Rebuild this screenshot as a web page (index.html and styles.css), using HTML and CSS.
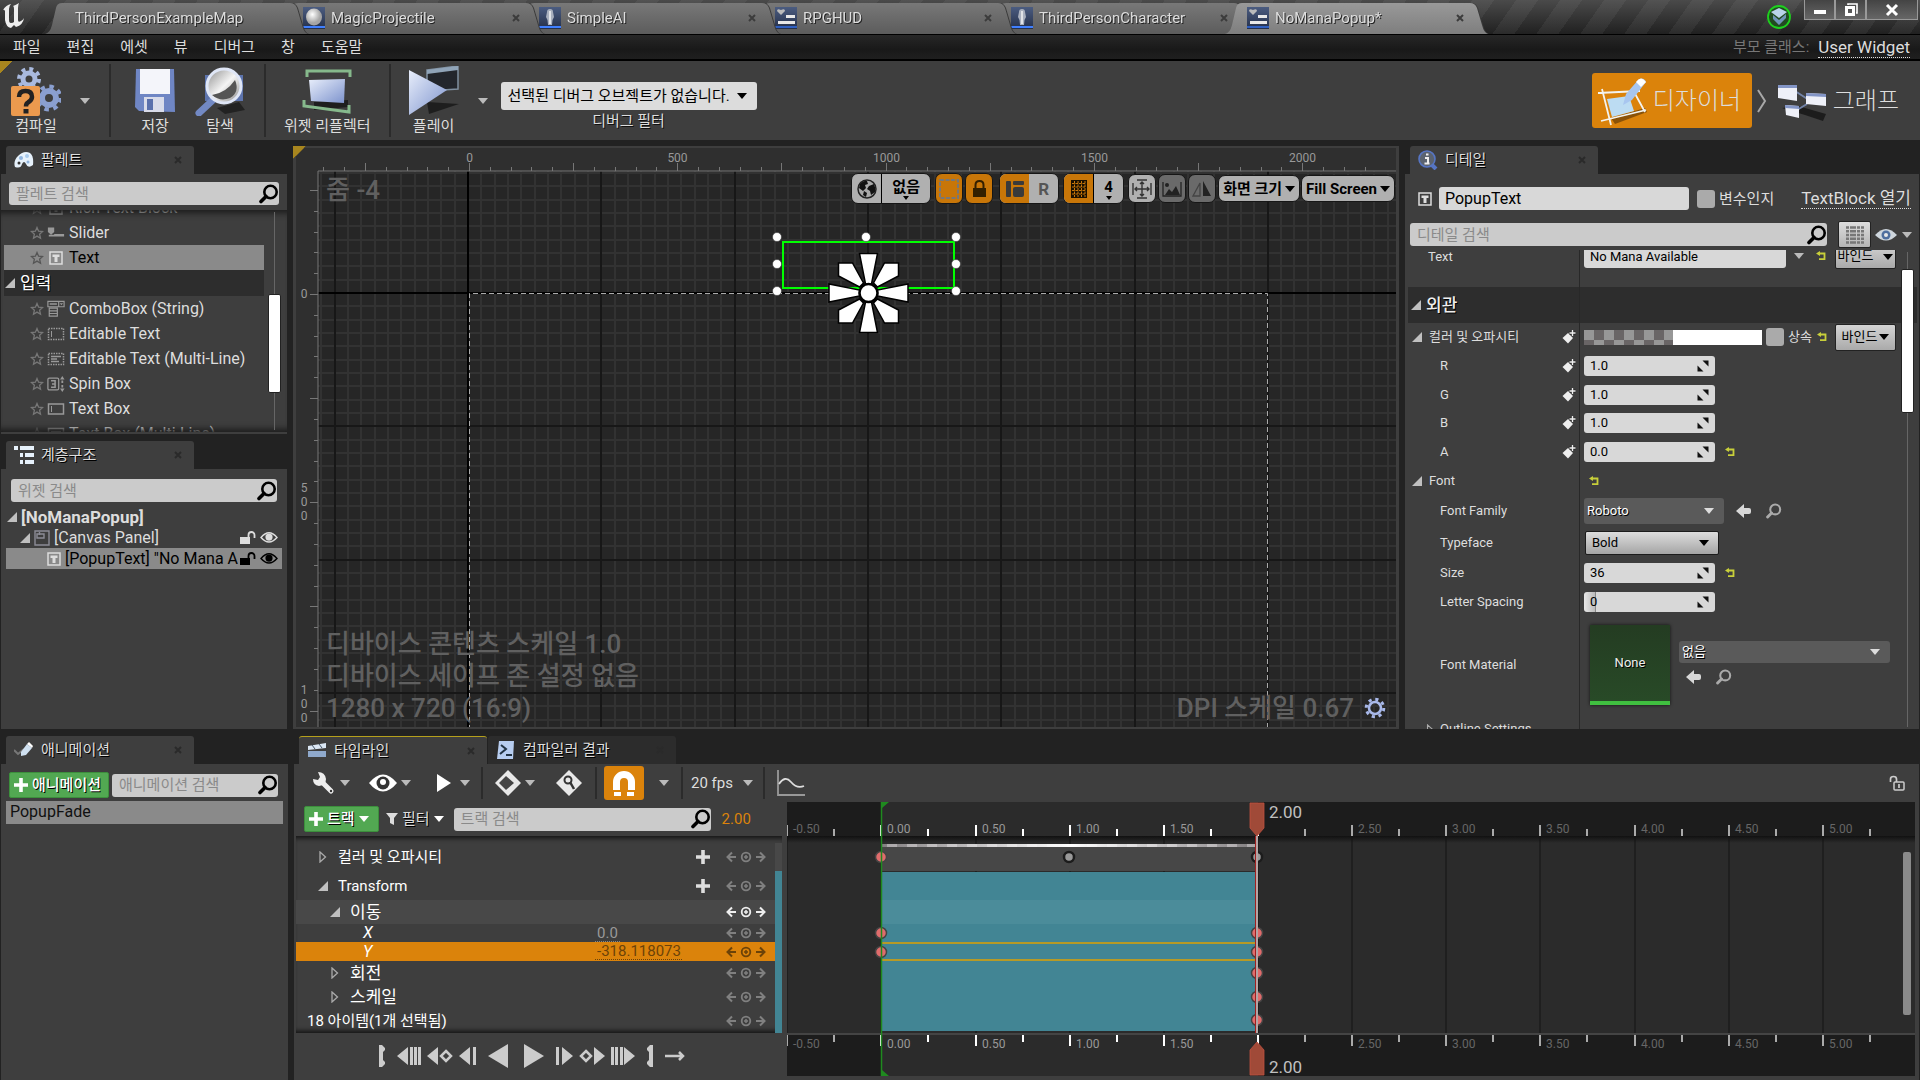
FILE: index.html
```html
<!DOCTYPE html>
<html lang="ko">
<head>
  <meta charset="UTF-8">
  <meta name="viewport" content="width=device-width, initial-scale=1.0">
  <title>NoManaPopup</title>
  <link rel="stylesheet" href="styles.css">
</head>
<body>
  <svg class="sprite" aria-hidden="true">
    <defs>
      <linearGradient id="blue" x1="0" y1="0" x2="1" y2="1"><stop offset="0" stop-color="#e8eefb"/><stop offset="1" stop-color="#7d93cd"/></linearGradient>
      <linearGradient id="steel" x1="0" y1="0" x2="0" y2="1"><stop offset="0" stop-color="#4b5c80"/><stop offset="1" stop-color="#25304a"/></linearGradient>
      <radialGradient id="ball" cx=".4" cy=".35"><stop offset="0" stop-color="#fff"/><stop offset="1" stop-color="#a5a5a5"/></radialGradient>
      <linearGradient id="lens" x1="0" y1="0" x2="1" y2="1"><stop offset="0" stop-color="#8c8c8c"/><stop offset=".5" stop-color="#f4f4f4"/><stop offset="1" stop-color="#888"/></linearGradient>
    </defs>
    <symbol id="i-search" viewBox="0 0 20 20"><circle cx="11.500" cy="8" r="6.200" fill="none" stroke="currentColor" stroke-width="2.600"/><path d="M7 12.500L2 17.500" stroke="currentColor" stroke-width="3.600" stroke-linecap="round"/></symbol>
    <symbol id="i-star" viewBox="0 0 14 14"><path d="M7 1.500l1.600 3.700 4 .3-3 2.700.9 4L7 10.100 3.500 12.200l.9-4-3-2.700 4-.3z" fill="none" stroke="currentColor" stroke-width="1.300"/></symbol>
    <symbol id="i-open" viewBox="0 0 10 10"><path d="M10 0v10H0z" fill="#c0c0c0"/></symbol>
    <symbol id="i-closed" viewBox="0 0 10 12"><path d="M2 1l5.500 5L2 11z" fill="none" stroke="#aaa" stroke-width="1.300"/></symbol>
    <symbol id="i-text" viewBox="0 0 14 14"><path d="M1 1h12v12H1z" fill="none" stroke="currentColor" stroke-width="1.500"/><path d="M3.500 3.500h7v2.600H8.500V11h-3V6.100h-2z" fill="currentColor"/></symbol>
    <symbol id="i-slider" viewBox="0 0 20 14"><path d="M1 1h7v5L4.500 9 1 6zM8 8h11v3H2V9h6z" fill="currentColor"/></symbol>
    <symbol id="i-combo" viewBox="0 0 20 20"><path d="M1 1.500h18v6H1zM13 1.500v6M2.500 9h9v9h-9zM2.500 12h9M2.500 15h9" fill="none" stroke="currentColor" stroke-width="1.300"/><path d="M3 3.700h8v1.600H3zM14.200 3.500h3.600L16 5.800z" fill="currentColor"/></symbol>
    <symbol id="i-edit" viewBox="0 0 18 14"><path d="M1.500 1.500h15v11h-15z" fill="none" stroke="currentColor" stroke-width="1.500" stroke-dasharray="1.500 1"/><path d="M4.500 4v6" stroke="currentColor"/></symbol>
    <symbol id="i-editm" viewBox="0 0 18 14"><path d="M1.500 1.500h15v11h-15z" fill="none" stroke="currentColor" stroke-width="1.500" stroke-dasharray="1.500 1"/><path d="M4 4.500h10M4 7h6M4 9.500h8" stroke="currentColor" stroke-width="1.300"/></symbol>
    <symbol id="i-box" viewBox="0 0 18 14"><path d="M1.500 2h15v10h-15z" fill="none" stroke="currentColor" stroke-width="1.500"/><path d="M4.500 4v6" stroke="currentColor"/></symbol>
    <symbol id="i-boxm" viewBox="0 0 18 14"><path d="M1.500 1.500h15v11h-15z" fill="none" stroke="currentColor" stroke-width="1.500"/><path d="M4 4.500h10M4 7h6" stroke="currentColor"/></symbol>
    <symbol id="i-spin" viewBox="0 0 20 18"><rect x="1" y="2.500" width="12" height="13" rx="1.500" fill="none" stroke="currentColor" stroke-width="1.400"/><path d="M4.500 5.500h4.500v7H4.500M5.500 9H9" fill="none" stroke="currentColor" stroke-width="1.700"/><path d="M14.500 4L17 0l2.500 4zM14.500 14l2.500 4 2.500-4zM16 5h2v3h-2zM16 10h2v3h-2z" fill="currentColor"/></symbol>
    <symbol id="i-canvas" viewBox="0 0 16 16"><path d="M1 1h14v14H1z" fill="none" stroke="#8c8c96" stroke-width="1.400"/><path d="M3 4h7v4H3zM5.500 2v3" fill="none" stroke="#8c8c96" stroke-width="1.400"/></symbol>
    <symbol id="i-unlock" viewBox="0 0 17 14"><path d="M1 6h10v7H1z" fill="currentColor"/><path d="M9.500 6.500V4a3 3 0 0 1 6 0v3" fill="none" stroke="currentColor" stroke-width="1.800"/></symbol>
    <symbol id="i-eye" viewBox="0 0 18 12"><path d="M1 6Q9-3.500 17 6 9 15 1 6z" fill="none" stroke="currentColor" stroke-width="1.400"/><circle cx="9" cy="5.600" r="3.600" fill="currentColor"/></symbol>
    <symbol id="i-plus" viewBox="0 0 14 14"><path d="M5.200 0h3.600v5.200H14v3.600H8.800V14H5.200V8.800H0V5.200h5.200z" fill="currentColor"/></symbol>
    <symbol id="i-reset" viewBox="0 0 10 10"><path d="M2 2.500h6.500v5.700H3" fill="none" stroke="#c8cf3a" stroke-width="1.800"/><path d="M0 2.500L4 0v5z" fill="#c8cf3a"/></symbol>
    <symbol id="i-key" viewBox="0 0 14 14"><path d="M6 3l5 5-5 5.500L.5 8z" fill="#eee"/><path d="M10.500 0v6M7.500 3h6" stroke="#222" stroke-width="3"/><path d="M10.500 0v6M7.500 3h6" stroke="#eee" stroke-width="1.500"/></symbol>
    <symbol id="i-spinner" viewBox="0 0 12 12"><path d="M5.500.500h6v6zM.500 5.500v6h6z" fill="#111"/></symbol>
    <symbol id="i-back" viewBox="0 0 16 16"><path d="M0 8l8-7v4h5a2 2 0 0 1 2 2v2a2 2 0 0 1-2 2H8v4z" fill="#d8d8d8"/></symbol>
    <symbol id="i-nav" viewBox="0 0 40 12"><path d="M10 6H2M6 1.500L1.500 6 6 10.500M30 6h8M34 1.500L38.500 6 34 10.500" fill="none" stroke="currentColor" stroke-width="2"/><circle cx="20" cy="6" r="4.300" fill="none" stroke="currentColor" stroke-width="1.800"/><path d="M20 4v4M18 6h4" stroke="currentColor" stroke-width="1.500"/></symbol>
    <symbol id="i-x" viewBox="0 0 8 8"><path d="M1 1l6 6M7 1L1 7" stroke="currentColor" stroke-width="2"/></symbol>
    <symbol id="i-class" viewBox="0 0 22 22"><path d="M0 0h22v22H0z" fill="url(#steel)"/><path d="M0 19h22v2H0z" fill="#3f7fff"/><path d="M11 2q3 0 3 3l1 5-1.500 3L13 18H9l-.5-5L7 10l1-5q0-3 3-3z" fill="#a9b0be"/><path d="M11 4v13" stroke="#f4f4f4" stroke-width="1.500"/></symbol>
    <symbol id="i-sphere" viewBox="0 0 22 22"><path d="M0 0h22v22H0z" fill="url(#steel)"/><path d="M0 19h22v2H0z" fill="#3f7fff"/><ellipse cx="11" cy="10" rx="8" ry="8.500" fill="url(#ball)"/></symbol>
    <symbol id="i-widget" viewBox="0 0 22 22"><path d="M0 0h22v22H0z" fill="url(#steel)"/><path d="M0 19h22v2H0z" fill="#2f5fc0"/><path d="M6 8L2 4q0-3 4-1 4-2 4 1z" fill="#bbb"/><path d="M11 8h9v3h-9zM3 14h17v3H3z" fill="#e8e8e8"/></symbol>
  </svg>

  <header class="titlebar">
    <svg class="logo" viewBox="0 0 30 34"><path d="M3 10q3-5 8-6-2 2-2 5v11q0 3 2 3 2 0 3-1V9q0-3-1-3 3-1 6-3-1 2-1 5v12q0 3 3 1 2-1 3-3-1 7-8 9l-2-2-3 3Q6 27 5 20V11q-1-2-2-1z" fill="#eee"/></svg>
    <nav class="doc-tabs">
      <a href="#" class="doc-tab first"><span class="shape"></span><span class="name">ThirdPersonExampleMap</span></a>
      <a href="#" class="doc-tab"><span class="shape"></span><svg class="ic22"><use href="#i-sphere"/></svg><span class="name">MagicProjectile</span><svg class="x"><use href="#i-x"/></svg></a>
      <a href="#" class="doc-tab"><span class="shape"></span><svg class="ic22"><use href="#i-class"/></svg><span class="name">SimpleAI</span><svg class="x"><use href="#i-x"/></svg></a>
      <a href="#" class="doc-tab"><span class="shape"></span><svg class="ic22"><use href="#i-widget"/></svg><span class="name">RPGHUD</span><svg class="x"><use href="#i-x"/></svg></a>
      <a href="#" class="doc-tab"><span class="shape"></span><svg class="ic22"><use href="#i-class"/></svg><span class="name">ThirdPersonCharacter</span><svg class="x"><use href="#i-x"/></svg></a>
      <a href="#" class="doc-tab active"><span class="shape"></span><svg class="ic22"><use href="#i-widget"/></svg><span class="name">NoManaPopup*</span><svg class="x"><use href="#i-x"/></svg></a>
    </nav>
    <svg class="tutorial" viewBox="0 0 26 26"><circle cx="13" cy="13" r="11" fill="#214a21" stroke="#1ed01e" stroke-width="1.800"/><path d="M5 8l8-4 8 4-8 6z" fill="#b9d3ea"/><path d="M7 11l6 5 7-6v4l-7 7-6-6z" fill="#6f93b8"/></svg>
    <div class="win-buttons">
      <button aria-label="최소화"><svg viewBox="0 0 14 14"><path d="M1 7h12v4H1z" fill="#fff"/></svg></button>
      <button aria-label="복원"><svg viewBox="0 0 14 14"><path d="M4 2V1h9v9h-1" fill="none" stroke="#fff" stroke-width="1.600"/><path d="M2.500 4.500h7v7h-7z" fill="none" stroke="#fff" stroke-width="3"/></svg></button>
      <button class="close" aria-label="닫기"><svg viewBox="0 0 14 14"><path d="M2 2l10 10M12 2L2 12" stroke="#fff" stroke-width="3"/></svg></button>
    </div>
  </header>

  <div class="menubar">
    <nav>
      <a href="#">파일</a><a href="#">편집</a><a href="#">에셋</a><a href="#">뷰</a><a href="#">디버그</a><a href="#">창</a><a href="#">도움말</a>
    </nav>
    <div class="parent-class"><span>부모 클래스:</span><a href="#" class="dotted">User Widget</a></div>
  </div>

  <div class="toolbar">
    <button class="tool compile">
      <svg viewBox="0 0 50 50"><g fill="none" stroke="#a9badf"><circle cx="18" cy="13" r="6" stroke-width="5"/><circle cx="18" cy="13" r="10" stroke-width="4" stroke-dasharray="3.900 3.950"/><circle cx="38" cy="32" r="7" stroke-width="6" stroke="#8a9fd0"/><circle cx="38" cy="32" r="11.500" stroke-width="4" stroke-dasharray="4.500 4.530" stroke="#8a9fd0"/></g><rect x="0" y="20" width="29" height="30" rx="2" fill="#eb9a4e"/><path d="M8 31q0-6 6.500-6t6.500 6q0 3-4 5.500-2 1-2 4" fill="none" stroke="#222" stroke-width="4.500"/><path d="M12.500 43h5v4.500h-5z" fill="#222"/></svg>
      <span>컴파일</span>
    </button>
    <button class="drop" aria-label="컴파일 옵션"><i class="tri"></i></button>
    <i class="vsep"></i>
    <button class="tool save">
      <svg viewBox="0 0 50 50"><path d="M6 3h38l1 43-36-1-4-4z" fill="#6f86c4"/><path d="M10 3h30v25H10z" fill="#f4f5fa"/><path d="M14 31h20v15H14z" fill="#d9dcea"/><path d="M17 33h6v11h-6z" fill="#5a70ac"/></svg>
      <span>저장</span>
    </button>
    <button class="tool browse">
      <svg viewBox="0 0 50 50"><path d="M22 42l22-6 6 8-20 4z" fill="#222"/><path d="M10 9h38v26H10z" fill="#5d74ad"/><path d="M18 34L4 47" stroke="#7289c4" stroke-width="7" stroke-linecap="round"/><circle cx="29" cy="20" r="17" fill="url(#lens)" stroke="#dfe6f6" stroke-width="3"/><path d="M17 29q14-2 23-15 5 12-5 18-10 4-18-3z" fill="#555"/></svg>
      <span>탐색</span>
    </button>
    <i class="vsep"></i>
    <button class="tool reflector">
      <svg viewBox="0 0 50 50"><path d="M12 36l34-2v7l-34 3z" fill="#1e1e1e"/><path d="M7 14l36-1-1 24-33-2z" fill="url(#blue)"/><path d="M5 11V5h43v6M2 34v6l45 6v-7" fill="none" stroke="#86b98c" stroke-width="3"/></svg>
      <span>위젯 리플렉터</span>
    </button>
    <i class="vsep"></i>
    <button class="tool play">
      <svg viewBox="0 0 50 50"><path d="M18 36l32 2-30 10z" fill="#1e1e1e"/><path d="M18 4l31-4v23l-31 2z" fill="#23262c" stroke="#8090a0" stroke-width="1.500"/><path d="M18 4l31-4v4L18 8z" fill="#90a4b8"/><path d="M0 4l38 20L0 49z" fill="url(#blue)"/></svg>
      <span>플레이</span>
    </button>
    <button class="drop" aria-label="플레이 옵션"><i class="tri"></i></button>
    <div class="debug">
      <div class="combo light"><select id="debug-object"><option>선택된 디버그 오브젝트가 없습니다.</option></select></div>
      <label for="debug-object">디버그 필터</label>
    </div>
    <div class="modes">
      <button class="mode on">
        <svg viewBox="0 0 50 50"><path d="M14 42l34-10 2 4-32 12z" fill="#8a5208"/><path d="M10 23l22-3 5 15-22 6z" fill="#bcdcf2"/><path d="M1 17l42-2M5 13l9 36M4 45l45-11M36 14l12 22" stroke="#f3f3ee" stroke-width="1.800" fill="none"/><path d="M26 29l3-11L42 3q5-2 7 3L35 24z" fill="#a8c6ef"/><path d="M39 6q5-7 10 0l-5 5z" fill="#fff"/></svg>
        디자이너
      </button>
      <svg class="chev" viewBox="0 0 10 24"><path d="M1 1l7 11-7 11" fill="none" stroke="#a8a8a8" stroke-width="2"/></svg>
      <button class="mode">
        <svg viewBox="0 0 50 50"><path d="M5 32l16-2 28 8-3 7-18-6z" fill="#1c1c1c"/><path d="M18 15l14 9M30 28L20 34" stroke="#7283a8" stroke-width="2"/><path d="M1 9h19v16L1 22zM29 17l20 1v12l-20-2zM8 29l14 1v12l-13-3z" fill="#eef0f8"/><path d="M1 9h19v3H1zM29 17l20 1v3l-20-1zM8 29l14 1v3l-14-1z" fill="#8395c6"/></svg>
        그래프
      </button>
    </div>
  </div>

  <main class="upper">
    <div class="side">
      <section class="panel palette">
        <div class="panel-tab"><svg class="ic20" viewBox="0 0 20 20"><path d="M1 17q-2-6 3-11 6-6 12-3 4 3 3 12-5 4-7-1-2-4-4 0-1 5-7 3z" fill="#e6f1fb"/><circle cx="7" cy="8" r="2" fill="#8fb4de"/><circle cx="13" cy="6" r="2" fill="#a8caec"/><circle cx="5" cy="13" r="1.500" fill="#333"/><circle cx="14" cy="12" r="1.500" fill="#8fb4de"/></svg>팔레트<svg class="x"><use href="#i-x"/></svg></div>
        <div class="panel-body">
          <div class="search"><input type="text" placeholder="팔레트 검색" aria-label="팔레트 검색"><svg><use href="#i-search"/></svg></div>
          <div class="scroll-box">
            <ul class="widget-list">
              <li><svg class="star"><use href="#i-star"/></svg><svg class="wi"><use href="#i-text"/></svg>Rich Text Block</li>
              <li><svg class="star"><use href="#i-star"/></svg><svg class="wi"><use href="#i-slider"/></svg>Slider</li>
              <li class="selected"><svg class="star"><use href="#i-star"/></svg><svg class="wi"><use href="#i-text"/></svg>Text</li>
              <li class="category"><svg class="arrow"><use href="#i-open"/></svg>입력</li>
              <li><svg class="star"><use href="#i-star"/></svg><svg class="wi big"><use href="#i-combo"/></svg>ComboBox (String)</li>
              <li><svg class="star"><use href="#i-star"/></svg><svg class="wi"><use href="#i-edit"/></svg>Editable Text</li>
              <li><svg class="star"><use href="#i-star"/></svg><svg class="wi"><use href="#i-editm"/></svg>Editable Text (Multi-Line)</li>
              <li><svg class="star"><use href="#i-star"/></svg><svg class="wi big"><use href="#i-spin"/></svg>Spin Box</li>
              <li><svg class="star"><use href="#i-star"/></svg><svg class="wi"><use href="#i-box"/></svg>Text Box</li>
              <li><svg class="star"><use href="#i-star"/></svg><svg class="wi"><use href="#i-boxm"/></svg>Text Box (Multi-Line)</li>
            </ul>
            <div class="scrollbar"><i></i></div>
          </div>
        </div>
      </section>

      <section class="panel hierarchy">
        <div class="panel-tab"><svg class="ic20" viewBox="0 0 20 20"><path d="M0 3h4M6 3h14M6 10h3M11 10h9M6 17h3M11 17h9" stroke="#e6f1fb" stroke-width="4"/></svg>계층구조<svg class="x"><use href="#i-x"/></svg></div>
        <div class="panel-body">
          <div class="search"><input type="text" placeholder="위젯 검색" aria-label="위젯 검색"><svg><use href="#i-search"/></svg></div>
          <ul class="tree">
            <li class="root"><svg class="arrow"><use href="#i-open"/></svg><span>[NoManaPopup]</span></li>
            <li class="lvl1"><svg class="arrow"><use href="#i-open"/></svg><svg class="ic16"><use href="#i-canvas"/></svg><span>[Canvas Panel]</span><svg class="lock"><use href="#i-unlock"/></svg><svg class="eye"><use href="#i-eye"/></svg></li>
            <li class="lvl2 selected"><svg class="ic14"><use href="#i-text"/></svg><span>[PopupText] "No Mana A</span><svg class="lock"><use href="#i-unlock"/></svg><svg class="eye"><use href="#i-eye"/></svg></li>
          </ul>
        </div>
      </section>
    </div>

    <section class="designer">
      <svg class="stage" id="stage">
        <g id="grid"></g>
        <path d="M0 147H4000M175 0V2000" stroke="#000" stroke-width="2" fill="none"/>
        <path d="M176.500 2000V147.500H974.500V2000" stroke="#aaa" stroke-dasharray="5 3" fill="none"/>
        <path d="M490 96h171v46H490z" fill="none" stroke="#0f0" stroke-width="2"/>
        <g fill="#fff" stroke="#222" stroke-width=".5"><circle cx="484" cy="91" r="4.500"/><circle cx="573" cy="91" r="4.500"/><circle cx="663" cy="91" r="4.500"/><circle cx="484" cy="118" r="4.500"/><circle cx="663" cy="118" r="4.500"/><circle cx="484" cy="145" r="4.500"/><circle cx="663" cy="145" r="4.500"/></g>
        <g transform="translate(575.500 147)" fill="#fff" stroke="#000" stroke-width="1.500">
          <path id="petal" d="M-9-39.500H9L3-9h-6z"/><use href="#petal" transform="rotate(90)"/><use href="#petal" transform="rotate(180)"/><use href="#petal" transform="rotate(270)"/>
          <path id="corner" d="M-30-30h14l11 20-4 4-21-11z"/><use href="#corner" transform="scale(-1 1)"/><use href="#corner" transform="rotate(180)"/><use href="#corner" transform="scale(1 -1)"/>
          <circle r="9" stroke-width="2.500"/>
        </g>
        <path d="M0 0H4000V25H25V2000H0z" fill="#2f2f2f"/>
        <path d="M4000 25H25V2000" fill="none" stroke="#777"/>
        <g id="rulers"></g>
        <path d="M0 0h13L0 13z" fill="#a8861f"/>
      </svg>
      <div class="zoom-label">줌 -4</div>
      <div class="view-bar">
        <div class="pill"><button aria-label="현지화"><svg viewBox="0 0 20 20"><circle cx="10" cy="10" r="9" fill="#a9a9a9" stroke="#222" stroke-width="1.500"/><path d="M3 5q4-4 7-3l1 3-3 1 1 3-3 3-4-3zM12 7l5-2q2 4 1 8l-4 3-1-4-3-2zM7 12l3 2-1 4-3-2z" fill="#111"/></svg></button><button class="stack div">없음<i class="mini"></i></button></div>
        <button class="pill one on" aria-label="점선 윤곽"><svg viewBox="0 0 20 20"><path d="M1 1h18v18H1z" fill="none" stroke="#777" stroke-width="2" stroke-dasharray="4 1.500"/></svg></button>
        <button class="pill one on gap2" aria-label="잠금"><svg viewBox="0 0 20 20"><path d="M4 9h13v9H4z" fill="#332000"/><path d="M6.500 10V6q0-4 4-4t4 4v4" fill="none" stroke="#332000" stroke-width="2"/></svg></button>
        <div class="pill"><button class="on" aria-label="레이아웃"><svg viewBox="0 0 20 20"><rect x="1" y="2" width="5" height="16" rx="1" fill="#3a3a3a"/><rect x="8" y="2" width="11" height="4" rx="1" fill="#3a3a3a"/><rect x="8" y="8" width="11" height="10" rx="2" fill="#3a3a3a"/></svg></button><button class="r">R</button></div>
        <div class="pill"><button class="on" aria-label="그리드 스냅"><svg viewBox="0 0 20 20"><path d="M2 1h16v18H2z" fill="#1a1000"/><path d="M3 4.500h14M3 8h14M3 11.500h14M3 15h14M5.500 2v16M9 2v16M12.500 2v16M16 2v16" stroke="#c87608" stroke-width="1" stroke-dasharray="2.500 1"/></svg></button><button class="stack div">4<i class="mini"></i></button></div>
        <button class="pill one small" aria-label="창에 맞춤"><svg viewBox="0 0 20 20"><path d="M5 1h10M5 19h10M1 4v12M19 4v12M10 3v14M3 10h14M8 5l2-2 2 2M8 15l2 2 2-2M5 8l-2 2 2 2M15 8l2 2-2 2" fill="none" stroke="#333" stroke-width="1.400"/></svg></button>
        <button class="pill one small dim" aria-label="배경"><svg viewBox="0 0 20 20"><path d="M1 3v14h18V3" fill="none" stroke="#222" stroke-width="1.300"/><path d="M3 16l4-6 3 3 4-6 4 9z" fill="#222"/><circle cx="5" cy="6" r="2" fill="#222"/></svg></button>
        <button class="pill one small dim" aria-label="뒤집기"><svg viewBox="0 0 20 20"><path d="M11 2v15h8z" fill="#222"/><path d="M8 4v13H1z" fill="none" stroke="#444" stroke-width="1.300"/></svg></button>
        <button class="pill txt">화면 크기<i class="tri dark"></i></button>
        <button class="pill txt">Fill Screen<i class="tri dark"></i></button>
      </div>
      <div class="info">
        <div>디바이스 콘텐츠 스케일 1.0</div>
        <div>디바이스 세이프 존 설정 없음</div>
        <div class="last"><span>1280 x 720 (16:9)</span><span>DPI 스케일 0.67<svg viewBox="0 0 22 22"><circle cx="11" cy="11" r="6" fill="none" stroke="#a9b9ea" stroke-width="2.600"/><circle cx="11" cy="11" r="8.800" fill="none" stroke="#a9b9ea" stroke-width="3" stroke-dasharray="3.200 3.710"/></svg></span></div>
      </div>
    </section>

    <section class="panel details">
      <div class="panel-tab"><svg class="ic20" viewBox="0 0 20 20"><path d="M13 14l5 5" stroke="#5675c4" stroke-width="4"/><circle cx="9" cy="9" r="8" fill="#5b6370" stroke="#5675c4" stroke-width="1.600"/><path d="M7 8h3v5M6.500 13.500h5M8 4.500h2.500" stroke="#eee" stroke-width="2" fill="none"/></svg>디테일<svg class="x"><use href="#i-x"/></svg></div>
      <div class="panel-body">
        <div class="name-row">
          <svg class="ic14"><use href="#i-text"/></svg>
          <input type="text" class="box name-box" value="PopupText" aria-label="이름">
          <input type="checkbox" id="is-var"><label for="is-var">변수인지</label>
          <a href="#" class="dotted">TextBlock 열기</a>
        </div>
        <div class="filter-row">
          <div class="search"><input type="text" placeholder="디테일 검색" aria-label="디테일 검색"><svg><use href="#i-search"/></svg></div>
          <button class="grid-btn" aria-label="프로퍼티 매트릭스"><svg viewBox="0 0 18 18"><path d="M0 1.500h18M0 5.300h18M0 9h18M0 12.800h18M0 16.500h18" stroke="#777" stroke-width="2.400" stroke-dasharray="3 1 6 1"/></svg></button>
          <button class="view-btn" aria-label="보기 옵션"><svg viewBox="0 0 22 14"><path d="M0 7Q11-5 22 7 11 18 0 7z" fill="#ced6dd"/><circle cx="11" cy="7" r="4.500" fill="#4f6f9f"/><circle cx="11" cy="7" r="2" fill="#e8e8e8"/></svg><i class="tri"></i></button>
        </div>
        <div class="scroll-box">
          <div class="props">
            <div class="prop r-text"><label for="p-text">Text</label><div class="val"><input type="text" id="p-text" class="box wide" value="No Mana Available"><i class="tri"></i><svg class="reset"><use href="#i-reset"/></svg><button class="bind">바인드<i class="tri dark"></i></button></div></div>
            <div class="prop head"><h2><svg class="arrow"><use href="#i-open"/></svg>외관</h2><div class="val"></div></div>
            <div class="prop r28"><div class="lbl"><svg class="arrow"><use href="#i-open"/></svg>컬러 및 오파시티<svg class="key"><use href="#i-key"/></svg></div><div class="val tight"><button class="swatch" aria-label="컬러"></button><input type="checkbox" id="inherit"><label for="inherit">상속</label><svg class="reset"><use href="#i-reset"/></svg><button class="bind">바인드<i class="tri dark"></i></button></div></div>
            <div class="prop"><label for="p-r">R<svg class="key"><use href="#i-key"/></svg></label><div class="val"><span class="num"><input type="text" id="p-r" class="box" value="1.0"><svg><use href="#i-spinner"/></svg></span></div></div>
            <div class="prop"><label for="p-g">G<svg class="key"><use href="#i-key"/></svg></label><div class="val"><span class="num"><input type="text" id="p-g" class="box" value="1.0"><svg><use href="#i-spinner"/></svg></span></div></div>
            <div class="prop r28"><label for="p-b">B<svg class="key"><use href="#i-key"/></svg></label><div class="val"><span class="num"><input type="text" id="p-b" class="box" value="1.0"><svg><use href="#i-spinner"/></svg></span></div></div>
            <div class="prop"><label for="p-a">A<svg class="key"><use href="#i-key"/></svg></label><div class="val"><span class="num"><input type="text" id="p-a" class="box" value="0.0"><svg><use href="#i-spinner"/></svg></span><svg class="reset"><use href="#i-reset"/></svg></div></div>
            <div class="prop"><div class="lbl"><svg class="arrow"><use href="#i-open"/></svg>Font</div><div class="val"><svg class="reset lone"><use href="#i-reset"/></svg></div></div>
            <div class="prop r32"><label for="p-family">Font Family</label><div class="val"><div class="combo gray family"><select id="p-family"><option>Roboto</option></select></div><svg class="ic16"><use href="#i-back"/></svg><svg class="ic16 mag"><use href="#i-search"/></svg></div></div>
            <div class="prop r32"><label for="p-face">Typeface</label><div class="val"><div class="combo face"><select id="p-face"><option>Bold</option></select></div></div></div>
            <div class="prop r28"><label for="p-size">Size</label><div class="val"><span class="num"><input type="text" id="p-size" class="box" value="36"><svg><use href="#i-spinner"/></svg></span><svg class="reset"><use href="#i-reset"/></svg></div></div>
            <div class="prop"><label for="p-ls">Letter Spacing</label><div class="val"><span class="num"><input type="text" id="p-ls" class="box part" value="0"><svg><use href="#i-spinner"/></svg></span></div></div>
            <div class="prop r-mat"><label for="p-mat">Font Material</label><div class="val"><div class="thumb">None</div><div class="mat"><div class="combo gray"><select id="p-mat"><option>없음</option></select></div><div><svg class="ic16"><use href="#i-back"/></svg><svg class="ic16 mag"><use href="#i-search"/></svg></div></div></div></div>
            <div class="prop"><div class="lbl sub"><svg class="arrow"><use href="#i-closed"/></svg>Outline Settings</div><div class="val"></div></div>
          </div>
          <div class="scrollbar"><i></i></div>
        </div>
      </div>
    </section>
  </main>

  <div class="lower">
    <section class="panel animations">
      <div class="panel-tab"><svg class="ic20" viewBox="0 0 20 20"><path d="M0 10l4 4 6-5" fill="none" stroke="#777" stroke-width="2"/><path d="M7 12l6-8 5 4-6 7-5 1z" fill="#cfe0f0"/><path d="M13 4l2-2 4 4-1 2z" fill="#fff"/></svg>애니메이션<svg class="x"><use href="#i-x"/></svg></div>
      <div class="panel-body">
        <div class="anim-row">
          <button class="green"><svg class="ic14"><use href="#i-plus"/></svg>애니메이션</button>
          <div class="search"><input type="text" placeholder="애니메이션 검색" aria-label="애니메이션 검색"><svg><use href="#i-search"/></svg></div>
        </div>
        <div class="anim-item">PopupFade</div>
      </div>
    </section>

    <section class="panel timeline">
      <div class="tab-strip">
        <div class="panel-tab current"><svg class="ic20" viewBox="0 0 20 20"><path d="M1 5l18-3v5L1 9z" fill="#dbe7f4"/><path d="M1 10h18v6H1z" fill="#8fa9cc"/><path d="M5 4l3 4M12 3l3 4" stroke="#456"/></svg>타임라인<svg class="x"><use href="#i-x"/></svg></div>
        <div class="panel-tab idle"><svg class="ic20" viewBox="0 0 20 20"><path d="M3 1h15l-1 18H1z" fill="#b7cdf0"/><path d="M5 5l5 4-6 5M10 15h6" fill="none" stroke="#234" stroke-width="2"/></svg>컴파일러 결과<svg class="x"><use href="#i-x"/></svg></div>
      </div>
      <div class="panel-body">
        <div class="seq-bar">
          <button class="sq wrench" aria-label="옵션"><svg viewBox="0 0 24 24"><path d="M10 11l9 9" stroke="#eee" stroke-width="5" stroke-linecap="round"/><path d="M6 1l2 5-2 3-5-1q0 6 6 7 7-1 7-7-1-7-8-7z" fill="#eee"/><circle cx="19" cy="20" r="1.200" fill="#333"/></svg><i class="tri"></i></button>
          <button class="sq view" aria-label="보기"><svg viewBox="0 0 28 18"><path d="M0 9Q14-8 28 9 14 26 0 9z" fill="#fff"/><circle cx="14" cy="9" r="6.500" fill="#333"/><circle cx="14" cy="8" r="3" fill="#fff"/></svg><i class="tri"></i></button>
          <button class="sq playopt" aria-label="재생 옵션"><svg viewBox="0 0 14 18"><path d="M0 0l14 9-14 9z" fill="#fff"/></svg><i class="tri"></i></button>
          <i class="vsep"></i>
          <button class="sq keyopt" aria-label="키 옵션"><svg viewBox="0 0 26 26"><path d="M13 0l13 13-13 13L0 13z" fill="#e8e8e8"/><path d="M11 6l8 7-8 7-7-7z" fill="#444"/></svg><i class="tri"></i></button>
          <button class="sq autokey" aria-label="자동 키"><svg viewBox="0 0 26 26"><path d="M13 0l13 13-13 13L0 13z" fill="#e8e8e8"/><circle cx="12" cy="10" r="3.500" fill="none" stroke="#333" stroke-width="2"/><path d="M14 12l4 7" stroke="#333" stroke-width="2.500"/></svg></button>
          <i class="vsep"></i>
          <button class="magnet" aria-label="스냅"><svg viewBox="0 0 24 26"><path d="M4.500 20v-8a7.500 7.500 0 0 1 15 0v8" fill="none" stroke="#fff" stroke-width="7"/><path d="M2 22h7v4H2zM15 22h7v4h-7z" fill="#fff"/></svg></button>
          <button class="drop2" aria-label="스냅 옵션"><i class="tri"></i></button>
          <i class="vsep"></i>
          <button class="fps">20 fps<i class="tri"></i></button>
          <i class="vsep"></i>
          <button class="curve" aria-label="커브 에디터"><svg viewBox="0 0 28 26"><path d="M1 0v25h27" fill="none" stroke="#999" stroke-width="1.800"/><path d="M2 14q6-9 12-2t13 4" fill="none" stroke="#ddd" stroke-width="1.800"/></svg></button>
          <svg class="seq-lock" viewBox="0 0 16 16"><rect x="5" y="7" width="10" height="8" rx="1" fill="none" stroke="#ccc" stroke-width="1.500"/><path d="M1.500 7V4q0-2.500 3-2.500T7.500 4v3M10 9v4" fill="none" stroke="#ccc" stroke-width="1.700"/></svg>
        </div>
        <div class="seq-main">
          <div class="tracks">
            <div class="track-bar">
              <button class="green"><svg class="ic14"><use href="#i-plus"/></svg>트랙<i class="tri"></i></button>
              <button class="filter"><svg viewBox="0 0 12 12"><path d="M0 0h12L8 5v7l-4-2V5z" fill="#ddd"/></svg>필터<i class="tri"></i></button>
              <div class="search"><input type="text" placeholder="트랙 검색" aria-label="트랙 검색"><svg><use href="#i-search"/></svg></div>
              <span class="now">2.00</span>
            </div>
            <div class="track-list">
              <div class="track t28 plain"><svg class="arrow"><use href="#i-closed"/></svg>컬러 및 오파시티<svg class="plus"><use href="#i-plus"/></svg><svg class="nav"><use href="#i-nav"/></svg></div>
              <div class="track t29"><svg class="arrow"><use href="#i-open"/></svg>Transform<svg class="plus"><use href="#i-plus"/></svg><svg class="nav"><use href="#i-nav"/></svg></div>
              <div class="track child hover"><svg class="arrow"><use href="#i-open"/></svg>이동<svg class="nav"><use href="#i-nav"/></svg></div>
              <div class="track axis"><em>X</em><input class="axis-val short" value="0.0" aria-label="X"><svg class="nav"><use href="#i-nav"/></svg></div>
              <div class="track axis picked"><em>Y</em><input class="axis-val" value="-318.118073" aria-label="Y"><svg class="nav"><use href="#i-nav"/></svg></div>
              <div class="track child"><svg class="arrow"><use href="#i-closed"/></svg>회전<svg class="nav"><use href="#i-nav"/></svg></div>
              <div class="track child"><svg class="arrow"><use href="#i-closed"/></svg>스케일<svg class="nav"><use href="#i-nav"/></svg></div>
              <div class="track status">18 아이템(1개 선택됨)<svg class="nav"><use href="#i-nav"/></svg></div>
            </div>
            <div class="transport">
              <button class="edge" aria-label="시작 지정"><svg width="8" viewBox="0 0 8 24"><path d="M1 1h3l3 3v2L5 8v8l2 2v2l-3 3H1z"/></svg></button>
              <button aria-label="처음으로"><svg width="24" viewBox="0 0 24 24"><path d="M11 3v18L0 12zM13 3h3v18h-3zM17 3h3v18h-3zM21 3h3v18h-3z"/></svg></button>
              <button aria-label="이전 키"><svg width="26" viewBox="0 0 26 24"><path d="M11 3v18L0 12z"/><path d="M19 7l5 5-5 5-5-5z" fill="none" stroke="#ccc" stroke-width="2.500"/></svg></button>
              <button aria-label="이전 프레임"><svg width="18" viewBox="0 0 18 24"><path d="M11 3v18L0 12zM14 3h3v18h-3z"/></svg></button>
              <button class="large" aria-label="역재생"><svg width="20" viewBox="0 0 20 24"><path d="M20 0v24L0 12z"/></svg></button>
              <button class="large" aria-label="재생"><svg width="20" viewBox="0 0 20 24"><path d="M0 0v24l20-12z"/></svg></button>
              <button aria-label="다음 프레임"><svg width="18" viewBox="0 0 18 24"><path d="M7 3v18l11-9zM1 3h3v18H1z"/></svg></button>
              <button aria-label="다음 키"><svg width="26" viewBox="0 0 26 24"><path d="M15 3v18l11-9z"/><path d="M7 7l5 5-5 5-5-5z" fill="none" stroke="#ccc" stroke-width="2.500"/></svg></button>
              <button aria-label="끝으로"><svg width="24" viewBox="0 0 24 24"><path d="M13 3v18l11-9zM0 3h3v18H0zM4 3h3v18H4zM9 3h3v18H9z"/></svg></button>
              <button class="edge" aria-label="끝 지정"><svg width="8" viewBox="0 0 8 24"><path d="M7 1H4L1 4v2l2 2v8l-2 2v2l3 3h3z"/></svg></button>
              <button aria-label="반복 안함"><svg width="20" viewBox="0 0 20 24"><path d="M0 12h18M14 8l4 4-4 4" fill="none" stroke="#ccc" stroke-width="2.500"/></svg></button>
            </div>
          </div>
          <div class="time-area">
            <svg class="time" id="time">
              <defs>
                <pattern id="checker" width="20" height="4" patternUnits="userSpaceOnUse"><path d="M0 0h20v4H0z" fill="#a09c9e"/><path d="M10 0h10v4H10z" fill="#757173"/></pattern>
                <linearGradient id="fade"><stop offset="0" stop-color="#fff" stop-opacity=".1"/><stop offset=".5" stop-color="#fff"/><stop offset="1" stop-color="#fff" stop-opacity=".1"/></linearGradient>
                <linearGradient id="shade" x1="0" y1="0" x2="0" y2="1"><stop offset="0" stop-color="#111"/><stop offset="1" stop-color="#111" stop-opacity="0"/></linearGradient>
              </defs>
              <path d="M0 0h4000v274H0z" fill="#1c1c1c"/>
              <path d="M95 0h376v274H95z" fill="#2b2b2b"/>
              <path d="M0 34h4000v197H0z" fill="#2b2b2b"/>
              <g id="time-grid"></g>
              <path d="M0 34h4000v7H0z" fill="url(#shade)"/>
              <path d="M0 231h4000v2H0z" fill="#444"/>
              <path d="M95 42h373v27H95z" fill="#474747"/>
              <path d="M95 42h373v3H95z" fill="url(#checker)"/><path d="M95 42h373v3H95z" fill="url(#fade)"/>
              <path d="M95 70h373v159H95z" fill="#428594"/>
              <path d="M95 98h373v24H95z" fill="#4b8c9a"/>
              <path d="M95 141h373M95 158h373" stroke="#b79a26" stroke-width="2"/>
              <g id="time-ticks"></g>
              <g id="keys"></g>
              <path d="M94.500 0v274" stroke="#1f8a1f" stroke-width="1.500"/><path d="M95 0h7l-7 6zM95 274h7l-7-6z" fill="#1f8a1f"/>
              <path d="M470 34v197" stroke="#b4a4a4" stroke-width="2"/><path d="M468.500 34v197" stroke="#a02020"/>
              <path d="M463 1h14v25l-7 8-7-8zM463 273h14v-25l-7-8-7 8z" fill="#a04a38" stroke="#c05040" stroke-width=".8"/>
              <text class="now-text" x="482" y="16">2.00</text><text class="now-text" x="482" y="271">2.00</text>
            </svg>
            <div class="time-scroll"></div>
          </div>
        </div>
      </div>
    </section>
  </div>

  <script>
    const NS = "http://www.w3.org/2000/svg";

    const add = (parent, tag, attrs, text) => {
      const el = document.createElementNS(NS, tag);
      Object.entries(attrs).forEach(([k, v]) => el.setAttribute(k, v));
      if (text !== undefined) el.textContent = text;
      parent.appendChild(el);
      return el;
    };

    const stage = document.getElementById("stage").getBoundingClientRect();
    const grid = document.getElementById("grid");
    const rulers = document.getElementById("rulers");

    // Designer grid, one major line every ten cells
    const drawGrid = (major) => {
      const attrs = { stroke: major ? "#171717" : "#323232", "stroke-width": 2 };
      for (let i = -12; i * 13 < stage.width; i++) {
        if ((i % 10 === 0) !== major) continue;
        add(grid, "path", { d: `M${Math.round(175 + i * 13.33)} 0v${stage.height}`, ...attrs });
        add(grid, "path", { d: `M0 ${Math.round(147 + i * 13.33)}h${stage.width}`, ...attrs });
      }
    };
    drawGrid(false);
    drawGrid(true);

    // Rulers, a tick every 50 units
    for (let i = -7; i * 20 < stage.width; i++) {
      const len = i % 5 === 0 ? 8 : 4;
      const x = Math.round(176 + i * 20.83) + 0.5;
      const y = Math.round(148 + i * 20.83) + 0.5;
      const label = i >= 0 && i % 10 === 0 ? String(i * 50) : "";
      if (x > 25 && x < stage.width - 20) {
        add(rulers, "path", { d: `M${x} ${25 - len}V25`, stroke: "#777" });
        if (label) add(rulers, "text", { x, y: 16, class: "ruler-text" }, label);
      }
      if (y > 25 && y < stage.height) {
        add(rulers, "path", { d: `M${25 - len} ${y}H25`, stroke: "#777" });
        label.split("").forEach((c, n) => {
          const cy = Math.round(y + 3 + (n - (label.length - 1) / 2) * 14);
          if (cy < stage.height) add(rulers, "text", { x: 11, y: cy, class: "ruler-text" }, c);
        });
      }
    }

    // Time rulers
    const timeWidth = document.getElementById("time").getBoundingClientRect().width;
    const ticks = document.getElementById("time-ticks");
    const timeGrid = document.getElementById("time-grid");
    for (let i = -2; 94 + i * 47.07 < timeWidth; i++) {
      const x = Math.round(94.4 + i * 47.07);
      const inside = i >= 0 && i <= 8;
      const len = i % 2 === 0 ? 11 : 7;
      add(ticks, "path", { d: `M${x} ${34 - len}V34M${x} 233V${233 + len}`, stroke: inside ? "#fff" : "#aaa", "stroke-width": 2 });
      if (i % 2 === 0) {
        add(timeGrid, "path", { d: `M${x} 34V231`, stroke: "#1f1f1f", "stroke-width": 2 });
        if (i !== 8 && x + 30 < timeWidth) {
          const attrs = { x: x + 6, class: inside ? "time-text" : "time-text out" };
          add(ticks, "text", { ...attrs, y: 31 }, (i / 4).toFixed(2));
          add(ticks, "text", { ...attrs, y: 246 }, (i / 4).toFixed(2));
        }
      }
    }

    // Keys
    const keys = document.getElementById("keys");
    const red = [[94, 55], [94, 131], [94, 150], [470, 131], [470, 150], [470, 171], [470, 195], [470, 218]];
    red.forEach(([cx, cy]) => add(keys, "circle", { cx, cy, r: 5.5, fill: "#e06c6c", stroke: "#444", "stroke-width": 1.5 }));
    [282, 470].forEach((cx) => add(keys, "circle", { cx, cy: 55, r: 5, fill: "#999", stroke: "#1c1c1c", "stroke-width": 2.5 }));
  </script>
</body>
</html>
```
FILE: styles.css
```css
* {
  box-sizing: border-box;
}
body {
  margin: 0;
  height: 100vh;
  display: flex;
  flex-direction: column;
  overflow: hidden;
  background: #222;
  color: #ddd;
  font-family: Roboto, "Noto Sans CJK KR", sans-serif;
  font-size: 15px;
  line-height: 20px;
}
button, input, select {
  font: inherit;
  color: inherit;
  margin: 0;
  padding: 0;
  border: 0;
  background: none;
}
button, a {
  cursor: pointer;
  white-space: nowrap;
}
a {
  color: inherit;
  text-decoration: none;
}
svg {
  flex: none;
  display: block;
}
ul {
  list-style: none;
  margin: 0;
  padding: 0;
}
.sprite {
  position: absolute;
  width: 0;
  height: 0;
}
.ic14 { width: 14px; height: 14px; }
.ic16 { width: 16px; height: 16px; }
.ic20 { width: 20px; height: 20px; }
.ic22 { width: 22px; height: 22px; }
.x { width: 8px; height: 8px; color: #3c3c3c; }
.arrow { width: 10px; height: 10px; }
.tri {
  flex: none;
  width: 0;
  height: 0;
  border: 5px solid transparent;
  border-top: 6px solid #bbb;
  border-bottom: 0;
}
.tri.dark {
  border-top-color: #000;
}
.vsep {
  flex: none;
  width: 2px;
  background: #2b2b2b;
}
.dotted {
  font-size: 17px;
  border-bottom: 1px dotted #ddd;
}

/* title bar */
.titlebar {
  flex: none;
  height: 34px;
  display: flex;
  align-items: flex-start;
  background: repeating-linear-gradient(125deg, transparent 0 18px, rgba(255,255,255,.05) 18px 36px), linear-gradient(#4a4a4a, #202020);
}
.logo {
  width: 30px;
  height: 34px;
  margin-right: 42px;
}
.doc-tabs {
  display: flex;
  flex: 1;
  isolation: isolate;
}
.doc-tab {
  position: relative;
  width: 263px;
  height: 34px;
  margin-left: -27px;
  padding: 2px 24px 0 22px;
  display: flex;
  align-items: center;
  gap: 6px;
  text-shadow: 1px 1px 0 #222;
  filter: drop-shadow(1px 0 0 #3a3a3a);
}
.doc-tab:nth-child(1) { z-index: 5; }
.doc-tab:nth-child(2) { z-index: 4; }
.doc-tab:nth-child(3) { z-index: 3; }
.doc-tab:nth-child(4) { z-index: 2; }
.doc-tab:nth-child(5) { z-index: 1; }
.doc-tab.active { z-index: 6; }
.doc-tab.first {
  padding-left: 30px;
}
.doc-tab .shape {
  position: absolute;
  inset: 3px 0 0;
  z-index: -1;
  background: linear-gradient(#787878, #5c5c5c);
  clip-path: path("M0 31Q5 30 7 22L11 5Q12 0 17 0H245Q250 0 252 5L257 22Q259 30 263 31Z");
}
.doc-tab.active .shape {
  background: linear-gradient(#999, #7e7e7e);
}
.doc-tab .name {
  flex: 1;
}
.tutorial {
  width: 26px;
  height: 26px;
  margin: 4px 12px 0 0;
}
.win-buttons {
  display: flex;
  margin-right: 2px;
}
.win-buttons button {
  width: 31px;
  height: 20px;
  display: flex;
  align-items: center;
  justify-content: center;
  border: 1px solid #999;
  border-top: 0;
  background: linear-gradient(#444, #666);
}
.win-buttons .close {
  width: 52px;
}
.win-buttons svg {
  width: 14px;
  height: 14px;
}

/* menu */
.menubar {
  flex: none;
  height: 27px;
  display: flex;
  align-items: center;
  justify-content: space-between;
  padding: 0 10px 0 13px;
  border-top: 1px solid #000;
  border-bottom: 2px solid #000;
  background: linear-gradient(#272727, #191919 60%, #1f1f1f);
}
.menubar nav {
  display: flex;
  gap: 26px;
}
.parent-class {
  display: flex;
  align-items: center;
  gap: 9px;
}
.parent-class span {
  color: #777;
}

/* toolbar */
.toolbar {
  flex: none;
  height: 79px;
  display: flex;
  padding: 3px 16px 3px 0;
  background: linear-gradient(135deg, #a8861f 9px, transparent 9px), #3e3e3e;
  text-shadow: 1px 1px 0 #111;
}
.tool {
  display: flex;
  flex-direction: column;
  align-items: center;
  padding-top: 2px;
}
.tool svg {
  width: 50px;
  height: 50px;
}
.compile { margin-left: 11px; }
.drop { width: 48px; display: flex; justify-content: center; padding-top: 34px; }
.save { margin-left: 19px; }
.browse { margin: 0 19px 0 15px; }
.reflector { margin: 0 18px; }
.play { margin-left: 18px; }
.debug {
  display: flex;
  flex-direction: column;
  align-items: center;
  gap: 1px;
  padding-top: 18px;
  margin-left: -6px;
}
.combo {
  position: relative;
  height: 26px;
}
.combo::after {
  content: "";
  position: absolute;
  right: 10px;
  top: 50%;
  margin-top: -3px;
  border: 5px solid transparent;
  border-top: 6px solid #ddd;
  border-bottom: 0;
  pointer-events: none;
}
.combo select {
  appearance: none;
  width: 100%;
  height: 100%;
  padding: 0 3px;
  border-radius: 3px;
}
.combo.light {
  width: 256px;
  height: 28px;
}
.combo.light select {
  padding-left: 7px;
  background: #dcdcdc;
  color: #000;
}
.combo.light::after, .combo.face::after {
  border-top-color: #000;
}
.combo.gray select {
  background: #5a5a5a;
  color: #fff;
  text-shadow: 1px 1px 0 #000;
}
.modes {
  margin-left: auto;
  display: flex;
  align-items: center;
  gap: 5px;
}
.mode {
  display: flex;
  align-items: center;
  gap: 6px;
  height: 55px;
  padding: 0 5px;
  font-size: 24px;
  font-weight: 300;
  text-shadow: none;
}
.mode.on {
  width: 160px;
  background: #db830b;
  border-radius: 3px;
}
.mode svg {
  width: 50px;
  height: 50px;
}
.mode + .chev {
  width: 10px;
  height: 24px;
}

/* panels */
.upper {
  flex: 1;
  min-height: 0;
  display: grid;
  grid-template-columns: 286px minmax(0, 1fr) 514px;
  gap: 6px;
  padding: 6px 1px 7px;
}
.lower {
  flex: none;
  height: 344px;
  display: grid;
  grid-template-columns: 287px minmax(0, 1fr);
  gap: 6px;
  padding: 0 1px;
}
.side {
  display: flex;
  flex-direction: column;
  gap: 7px;
  min-height: 0;
}
.panel {
  display: flex;
  flex-direction: column;
  min-width: 0;
  min-height: 0;
}
.panel-body {
  flex: 1;
  min-height: 0;
  display: flex;
  flex-direction: column;
  background: #3e3e3e;
}
.panel-tab {
  flex: none;
  width: 188px;
  height: 28px;
  margin-left: 5px;
  padding: 0 12px 0 8px;
  display: flex;
  align-items: center;
  gap: 7px;
  background: #3e3e3e;
  border-radius: 3px 3px 0 0;
  text-shadow: 1px 1px 0 #000;
}
.panel-tab .x {
  margin-left: auto;
  color: #2a2a2a;
}
.search {
  flex: none;
  min-width: 0;
  height: 23px;
  display: flex;
  align-items: center;
  background: #cbcbcb;
  border-radius: 3px;
  color: #000;
}
.search input {
  flex: 1;
  min-width: 0;
  padding-left: 7px;
  outline: 0;
}
.search input::placeholder {
  color: #8a8a8a;
  opacity: 1;
}
.search svg {
  width: 20px;
  height: 20px;
}
.scroll-box {
  position: relative;
  flex: 1;
  min-height: 0;
  overflow: hidden;
}
.scrollbar {
  position: absolute;
  top: 2px;
  bottom: 2px;
  right: 12px;
  width: 1px;
  background: #666;
}
.scrollbar i {
  position: absolute;
  left: -6px;
  width: 13px;
  background: #fff;
  border: 1px solid #222;
  border-radius: 2px;
}

/* palette */
.palette {
  flex: none;
  height: 288px;
}
.palette .search {
  margin: 8px 8px 5px;
}
.palette .scroll-box {
  margin-bottom: 2px;
}
.palette .scroll-box::before {
  content: "";
  position: absolute;
  inset: 0;
  box-shadow: inset 0 9px 6px -6px #1c1c1c, inset 0 -9px 6px -6px #1c1c1c;
  pointer-events: none;
}
.widget-list {
  margin: -15px 23px 0 3px;
  font-size: 16px;
}
.widget-list li {
  height: 25px;
  display: flex;
  align-items: center;
  padding-left: 26px;
  white-space: nowrap;
}
.widget-list .star {
  width: 14px;
  height: 14px;
  color: #777;
}
.widget-list .wi {
  width: 18px;
  height: 14px;
  margin: 0 4px 0 3px;
  color: #999;
}
.widget-list .wi.big {
  height: 18px;
}
.widget-list .selected {
  background: #8a8a8a;
  color: #000;
}
.widget-list .selected .star {
  color: #555;
}
.widget-list .selected .wi {
  color: #ddd;
}
.widget-list .category {
  height: 26px;
  padding-left: 1px;
  gap: 5px;
  background: #2d2d2d;
  color: #fff;
  font-size: 17px;
  text-shadow: 1px 1px 0 #000;
}
.palette .scrollbar i {
  top: 82px;
  height: 99px;
}

/* hierarchy */
.hierarchy {
  flex: 1;
}
.hierarchy .search {
  margin: 10px 10px 4px;
}
.tree {
  padding: 0 5px;
  font-size: 16px;
}
.tree li {
  height: 21px;
  display: flex;
  align-items: center;
  gap: 4px;
  padding-right: 4px;
}
.tree span {
  flex: 1;
  white-space: nowrap;
}
.tree .root {
  padding-left: 1px;
  font-size: 17px;
  font-weight: bold;
}
.tree .lvl1 { padding-left: 14px; }
.tree .lvl2 { padding-left: 41px; }
.tree .selected {
  background: #8a8a8a;
  color: #000;
}
.tree .selected .ic14 { color: #ddd; }
.tree .selected span { width: 0; }
.tree .lock { width: 17px; height: 14px; }
.tree .eye { width: 18px; height: 13px; }

/* designer */
.designer {
  position: relative;
  display: flex;
  flex-direction: column;
  justify-content: space-between;
  padding: 28px 3px 5px 33px;
  overflow: hidden;
  background: #262626;
}
.designer::after {
  content: "";
  position: absolute;
  inset: 0;
  border: 2px solid #3e3e3e;
  border-width: 2px 3px;
  clip-path: polygon(13px 0, 100% 0, 100% 100%, 0 100%, 0 13px);
  pointer-events: none;
}
.stage {
  position: absolute;
  inset: 0;
  width: 100%;
  height: 100%;
}
.ruler-text {
  font-size: 12px;
  fill: #999;
  text-anchor: middle;
}
.zoom-label, .info {
  position: relative;
  color: #606060;
  font-size: 26px;
  font-weight: 500;
  line-height: 32px;
}
.zoom-label {
  height: 32px;
}
.info .last {
  display: flex;
  justify-content: space-between;
}
.info .last span {
  display: flex;
  align-items: center;
  gap: 10px;
}
.info svg {
  width: 22px;
  height: 22px;
  margin-right: 10px;
}
.view-bar {
  position: absolute;
  top: 27px;
  right: 3px;
  display: flex;
  align-items: center;
  color: #000;
  font-weight: bold;
}
.pill {
  display: flex;
  height: 31px;
  margin-right: 4px;
  overflow: hidden;
  border: 1px solid #161616;
  border-radius: 7px;
  background: #b0b0b0;
}
.pill button {
  width: 29px;
  display: flex;
  align-items: center;
  justify-content: center;
}
.pill button.div {
  border-left: 1px solid #000;
}
.pill .stack {
  flex-direction: column;
  width: 30px;
  line-height: 18px;
}
.pill:first-child .stack {
  width: 49px;
}
.pill svg {
  width: 20px;
  height: 20px;
}
.pill .on, .pill.on {
  background: #c87608;
}
.pill .r {
  color: #555;
  font-size: 17px;
}
.pill.one {
  width: 28px;
  align-items: center;
  justify-content: center;
  margin-right: 2px;
}
.pill.one.gap2 {
  margin-right: 6px;
}
.pill.small {
  height: 29px;
}
.pill.dim {
  background: #6a6a6a;
}
.pill.txt {
  height: 27px;
  align-items: center;
  gap: 3px;
  padding: 0 4px;
  margin-right: 1px;
}
.mini {
  width: 0;
  border: 3px solid transparent;
  border-top: 4px solid #000;
  border-bottom: 0;
}

/* details */
.name-row {
  display: flex;
  align-items: center;
  height: 23px;
  margin: 13px 8px 0 13px;
}
.box {
  height: 20px;
  width: 131px;
  padding-left: 6px;
  border-radius: 3px;
  background: #d8d8d8;
  color: #000;
}
.name-box {
  width: 250px;
  height: 23px;
  margin: 0 8px 0 7px;
  font-size: 16px;
}
input[type="checkbox"] {
  appearance: none;
  flex: none;
  width: 18px;
  height: 18px;
  margin-right: 4px;
  border-radius: 3px;
  background: #aaa;
}
.name-row .dotted {
  margin-left: auto;
}
.filter-row {
  display: flex;
  align-items: center;
  height: 27px;
  margin: 11px 7px 2px 5px;
}
.filter-row .search {
  flex: 1;
}
.grid-btn {
  width: 33px;
  height: 27px;
  margin: 0 4px 0 11px;
  display: flex;
  align-items: center;
  justify-content: center;
  border: 1px solid #222;
  border-radius: 2px;
  background: linear-gradient(#ddd, #b4b4b4);
}
.grid-btn svg {
  width: 18px;
  height: 18px;
}
.view-btn {
  display: flex;
  align-items: center;
  gap: 5px;
}
.view-btn svg {
  width: 22px;
  height: 14px;
}
.props {
  margin: 0 2px 0 3px;
  font-size: 13px;
}
.prop {
  height: 29px;
  display: grid;
  grid-template-columns: 171px minmax(0, 1fr);
}
.prop > label, .lbl {
  position: relative;
  display: flex;
  align-items: center;
  padding-left: 32px;
}
.lbl {
  padding-left: 4px;
  gap: 7px;
}
.lbl.sub {
  padding-left: 17px;
  gap: 5px;
}
.key {
  width: 14px;
  height: 14px;
  margin-left: auto;
  margin-right: 3px;
}
.val {
  display: flex;
  align-items: center;
  padding-left: 4px;
  border-left: 1px solid #282828;
}
.r28 { height: 28px; }
.r32 { height: 32px; }
.r-mat { height: 98px; }
.r-text {
  height: 37px;
  align-items: start;
}
.r-text > label {
  padding: 4px 0 0 20px;
  line-height: 6px;
}
.r-text .val {
  height: 37px;
  align-items: flex-start;
}
.r-text .wide {
  width: 202px;
  height: 23px;
  margin-top: -5px;
}
.r-text .tri { margin: 3px 0 0 8px; }
.r-text .reset { margin: 1px 0 0 12px; }
.r-text .bind { margin-top: -8px; }
.head {
  height: 36px;
  background: #2d2d2d;
}
.head h2 {
  display: flex;
  align-items: center;
  gap: 5px;
  margin: 0 0 0 3px;
  font-size: 17px;
  font-weight: 500;
  color: #eee;
  text-shadow: 1px 1px 0 #000;
}
.reset {
  width: 10px;
  height: 10px;
  margin-left: 10px;
}
.tight .reset, .val .lone {
  margin-left: 5px;
}
.bind {
  flex: none;
  width: 61px;
  height: 27px;
  margin-left: auto;
  margin-right: 21px;
  display: flex;
  align-items: center;
  justify-content: center;
  gap: 2px;
  border: 1px solid #222;
  border-radius: 2px;
  background: linear-gradient(#d4d4d4, #aaa);
  color: #000;
}
.swatch {
  width: 178px;
  height: 15px;
  margin-right: 4px;
  background: linear-gradient(90deg, transparent 50%, #fff 50%), repeating-conic-gradient(#696566 0 25%, #979797 0 50%) 0 0 / 20px 20px;
}
.num {
  position: relative;
}
.num .box {
  display: block;
}
.num svg {
  position: absolute;
  right: 6px;
  top: 4px;
  width: 12px;
  height: 12px;
}
.part {
  background: linear-gradient(90deg, #e8e8e8, #bbb 11px, #888 11px 12px, #d8d8d8 12px);
}
.family { width: 140px; }
.family + .ic16 { margin-left: 12px; }
.mag {
  margin-left: 14px;
  color: #aaa;
}
.combo.face {
  width: 134px;
  height: 24px;
  margin-left: 1px;
}
.face select {
  padding-left: 6px;
  border: 1px solid #1c1c1c;
  border-radius: 2px;
  background: linear-gradient(#ddd, #a5a5a5);
  color: #000;
}
.thumb {
  width: 80px;
  height: 80px;
  margin: 0 9px 0 6px;
  display: flex;
  align-items: center;
  justify-content: center;
  border-bottom: 4px solid #40c040;
  background: linear-gradient(#243c22, #284a27);
  box-shadow: 0 0 3px #111;
  color: #eee;
  text-shadow: 1px 1px 0 #000;
}
.mat {
  flex: 1;
  margin-right: 27px;
}
.mat .combo {
  height: 22px;
}
.mat > div + div {
  display: flex;
  margin: 6px 0 4px 7px;
}
.details .scrollbar i {
  top: 17px;
  height: 144px;
}
.details .scrollbar {
  right: 11px;
}

/* animations */
.anim-row {
  display: flex;
  align-items: center;
  gap: 3px;
  margin: 8px 10px 3px 8px;
}
.anim-row .search {
  flex: 1;
}
.green {
  flex: none;
  height: 26px;
  display: flex;
  align-items: center;
  gap: 4px;
  padding: 0 4px;
  border: 1px solid #3c8f3c;
  border-radius: 2px;
  background: #52a852;
  color: #fff;
  font-weight: 500;
  text-shadow: 1px 1px 0 #000;
}
.green .tri, .filter .tri {
  border-top-color: #fff;
}
.anim-row .green {
  width: 100px;
}
.anim-item {
  height: 23px;
  margin: 0 5px;
  padding: 1px 4px;
  background: #8a8a8a;
  color: #111;
  font-size: 16px;
}

/* timeline */
.tab-strip {
  display: flex;
}
.panel-tab.current {
  border-top: 1px solid #b5a01c;
}
.panel-tab.idle {
  margin-left: 1px;
  background: #2c2c2c;
}
.seq-bar {
  flex: none;
  height: 38px;
  display: flex;
  align-items: center;
  padding: 0 14px 0 18px;
}
.seq-bar button {
  display: flex;
  align-items: center;
}
.seq-bar .vsep {
  height: 32px;
}
.sq { gap: 4px; }
.wrench svg { width: 24px; height: 24px; }
.view { margin-left: 19px; }
.view svg { width: 28px; height: 18px; }
.playopt { margin: 0 11px 0 26px; }
.playopt svg { width: 14px; height: 18px; margin-right: 5px; }
.keyopt { margin: 0 21px 0 12px; }
.keyopt svg, .autokey svg { width: 26px; height: 26px; }
.autokey { margin-right: 13px; }
.magnet {
  width: 40px;
  height: 34px;
  margin: 0 15px 0 7px;
  justify-content: center;
  border-radius: 3px;
  background: #db830b;
}
.magnet svg { width: 24px; height: 26px; }
.drop2 { margin-right: 12px; }
.fps { gap: 10px; margin: 0 10px 0 8px; }
.curve { margin-left: 12px; }
.curve svg { width: 28px; height: 26px; }
.seq-lock {
  width: 16px;
  height: 16px;
  margin-left: auto;
}
.seq-main {
  flex: 1;
  min-height: 0;
  display: flex;
}
.tracks {
  flex: none;
  width: 493px;
  display: flex;
  flex-direction: column;
}
.track-bar {
  height: 34px;
  display: flex;
  align-items: center;
  padding: 0 0 0 10px;
}
.track-bar .search {
  width: 257px;
  margin: 0 11px 0 10px;
}
.track-bar .green {
  width: 75px;
}
.filter {
  display: flex;
  align-items: center;
  gap: 4px;
  margin-left: 7px;
  text-shadow: 1px 1px 0 #000;
}
.filter svg {
  width: 12px;
  height: 12px;
}
.now {
  color: #db830b;
}
.track-list {
  height: 197px;
  margin: 0 5px 0 2px;
  padding-top: 7px;
  box-shadow: inset 0 6px 5px -4px #111, inset 0 -6px 5px -4px #111;
}
.track {
  height: 24px;
  display: flex;
  align-items: center;
  padding: 0 9px 0 22px;
  border-right: 7px solid #428594;
  color: #fff;
}
.track .arrow {
  height: 12px;
  margin-right: 10px;
}
.track.t28 { height: 28px; }
.track.t29 { height: 29px; }
.track.plain { border-right-color: #484848; }
.track.child {
  padding-left: 34px;
  font-size: 17px;
}
.track.hover { background: #484848; }
.track .nav {
  width: 40px;
  height: 12px;
  margin-left: auto;
  color: #808080;
}
.track .plus {
  width: 14px;
  height: 14px;
  margin: 0 16px 0 auto;
  color: #ddd;
}
.track .plus + .nav {
  margin-left: 0;
}
.track.hover .nav { color: #eee; }
.track.axis {
  height: 18px;
  padding-left: 67px;
}
.track.axis em {
  width: 232px;
  font-size: 16px;
}
.axis-val {
  width: 87px;
  height: 17px;
  padding-left: 2px;
  border-bottom: 1px dotted #888;
  color: #999;
}
.axis-val.short {
  width: 25px;
}
.track.picked {
  height: 19px;
  background: #db830b;
}
.picked .axis-val, .picked .nav {
  color: #6b4208;
}
.picked .axis-val {
  border-color: #6b4208;
}
.track.status {
  padding-left: 11px;
}
.transport {
  flex: 1;
  display: flex;
  align-items: center;
  gap: 6px;
  padding: 0 0 2px 79px;
}
.transport svg {
  height: 24px;
  fill: #ccc;
}
.transport .edge {
  margin: 0 5px;
}
.transport .large {
  margin: 0 5px;
}
.time-area {
  position: relative;
  flex: 1;
  min-width: 0;
  margin-right: 4px;
}
.time {
  width: 100%;
  height: 274px;
}
.time-text {
  font-size: 12px;
  fill: #999;
}
.time-text.out {
  fill: #666;
}
.now-text {
  font-size: 17px;
  fill: #c0c0c0;
}
.time-scroll {
  position: absolute;
  right: 4px;
  top: 50px;
  width: 8px;
  height: 163px;
  border-radius: 2px;
  background: #8a8a8a;
}
```
